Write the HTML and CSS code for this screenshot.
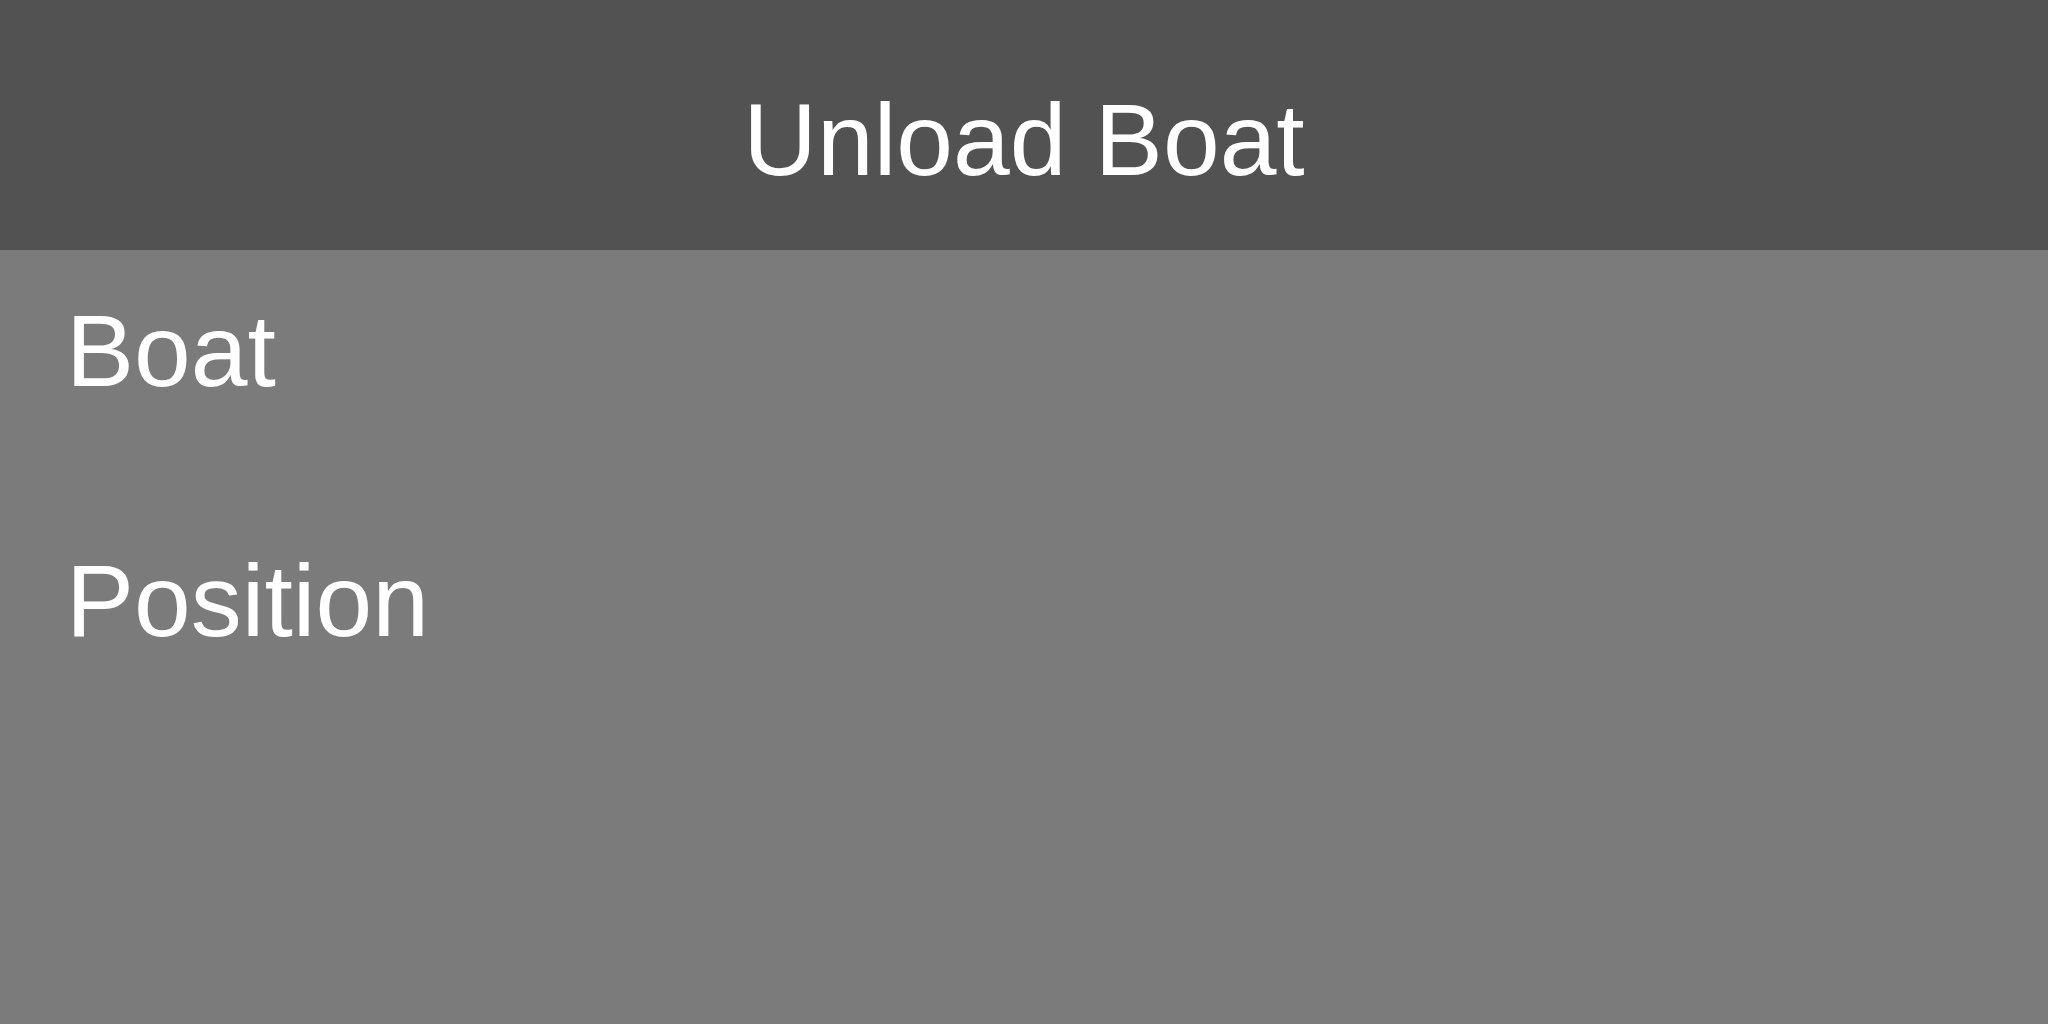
FILE: index.html
```html
<!DOCTYPE html>
<html>
<head>
<meta charset="utf-8">
<title>Unload Boat</title>
<link rel="stylesheet" href="styles.css">
</head>
<body>
<div class="screen">
  <header class="header">
    <h1 class="title">Unload Boat</h1>
  </header>
  <main class="content">
    <div class="field">Boat</div>
    <div class="field">Position</div>
  </main>
</div>
</body>
</html>
```
FILE: styles.css
```css
html, body {
  margin: 0;
  padding: 0;
  width: 2048px;
  height: 1024px;
  overflow: hidden;
}
body {
  font-family: "Liberation Sans", Arial, sans-serif;
  color: #ffffff;
  background: #7b7b7b;
}
.screen {
  display: flex;
  flex-direction: column;
  height: 1024px;
}
.header {
  box-sizing: border-box;
  height: 250px;
  background: #525252;
  padding-top: 89px;
  display: flex;
  justify-content: center;
}
.title {
  margin: 0;
  font-weight: normal;
  font-size: 102px;
  line-height: 102px;
}
.content {
  flex: 1;
  background: #7b7b7b;
  display: flex;
  flex-direction: column;
  gap: 148px;
  padding: 50px 0 0 66px;
}
.field {
  font-size: 102px;
  line-height: 102px;
}
```
